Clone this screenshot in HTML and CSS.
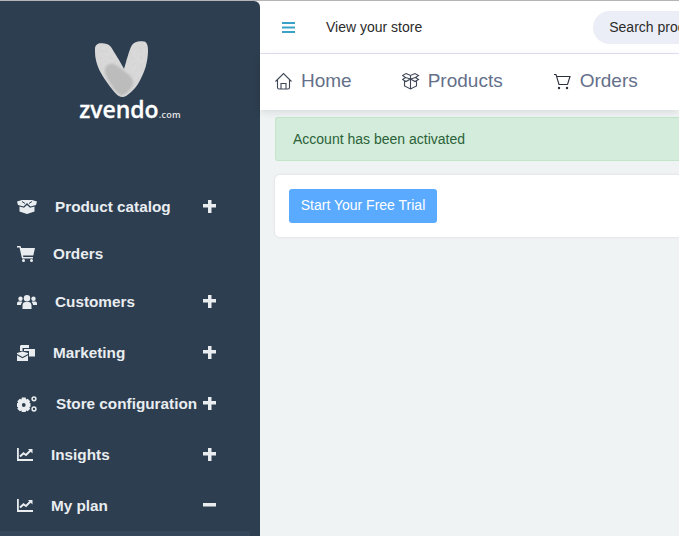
FILE: index.html
```html
<!DOCTYPE html>
<html lang="en">
<head>
<meta charset="utf-8">
<title>zvendo</title>
<link rel="stylesheet" href="styles.css">
</head>
<body>
<div class="app">
  <aside class="sidebar">
    <div class="logo">
      <svg class="logo-mark" width="56" height="58" viewBox="94 40 56 58" aria-hidden="true">
        <defs>
          <filter id="stone" x="0" y="0" width="100%" height="100%">
            <feTurbulence type="fractalNoise" baseFrequency="0.3" numOctaves="3" seed="7"/>
            <feColorMatrix values="0 0 0 0 0.6  0 0 0 0 0.6  0 0 0 0 0.6  0 0 0 .8 -0.25"/>
            <feComposite in2="SourceGraphic" operator="in"/>
            <feMerge><feMergeNode in="SourceGraphic"/><feMergeNode/></feMerge>
          </filter>
          <filter id="soft" x="-10%" y="-10%" width="120%" height="120%">
            <feGaussianBlur stdDeviation=".9"/>
          </filter>
        </defs>
        <path class="stone" filter="url(#stone)" d="M95 49C95 44 99 42.500 104 43.500C109 44 111 46 114 52C118 58 122 65 124 69C126 63 129 50 132 45C134 42 139 40.500 144 41.500C147 42 148 46 148 50C148 58 146 68 143 74C140 81 136 88 131 92C127 96 123 98 120 96.500C116 95 111 88 106 81C101 74 97 66 96 60C95 56 95 52 95 49Z"/>
        <path class="stone-dark" filter="url(#soft)" d="M105 72C104 67 108 63 113 64C118 65 123 71 128 74C132 77 134 81 133 84C131 89 127 94 122 95.500C118 95 114 89 110 83C107 79 106 76 105 72Z"/>
      </svg>
      <div class="logo-word">zvendo<span class="logo-com">.com</span></div>
    </div>
    <nav class="menu">
      <div class="item item-a">
        <svg class="ico" width="20" height="14" viewBox="0 0 20 14"><path d="M0 1.500L5 0H15L20 1.500L19 5L13.500 6.500L10 3L6.500 6.500L1 5Z"/><path d="M2.500 6.500L7 7.800L10 5L13 7.800L17.500 6.500V11.500L10 14L2.500 11.500Z"/><path class="cut" d="M5 1.500L8 3.500M15 1.500L12 3.500"/></svg>
        <span class="label l-55">Product catalog</span>
        <span class="tog"></span>
      </div>
      <div class="item item-b">
        <svg class="ico" width="18" height="16" viewBox="0 0 18 16"><path d="M0 0H3.500L4.200 2H18L16.300 9.500H6L6.300 11H16V12.500H5L2.500 1.500H0Z"/><circle cx="6.500" cy="14.500" r="1.500"/><circle cx="14.500" cy="14.500" r="1.500"/></svg>
        <span class="label l-53">Orders</span>
      </div>
      <div class="item">
        <svg class="ico" width="20" height="14" viewBox="0 0 20 14"><circle cx="10" cy="3.300" r="3.200"/><circle cx="3.500" cy="3.800" r="2.200"/><circle cx="16.500" cy="3.800" r="2.200"/><path d="M5.500 14V10.500C5.500 8 7 7 8.500 7H11.500C13 7 14.500 8 14.500 10.500V14ZM0 10V8.500C0 7 1 6.500 2 6.500H4.500C5 6.500 5.500 7 5 7.500C4.300 8.300 4 9 3.900 10ZM20 10V8.500C20 7 19 6.500 18 6.500H15.500C15 6.500 14.500 7 15 7.500C15.700 8.300 16 9 16.100 10Z"/></svg>
        <span class="label l-55">Customers</span>
        <span class="tog"></span>
      </div>
      <div class="item">
        <svg class="ico" width="18" height="16" viewBox="0 0 18 16"><path d="M4 0H12V3H5.500V6H3V1Z"/><path d="M7 4H18V11.500H12V6H7Z"/><path d="M0 8L5.500 6.500L11 8V9L5.500 12L0 9Z"/><path d="M0 10.300L5.500 13.300L11 10.300V16H0Z"/></svg>
        <span class="label l-53">Marketing</span>
        <span class="tog"></span>
      </div>
      <div class="item">
        <svg class="ico" width="20" height="16" viewBox="0 0 20 16"><path fill-rule="evenodd" d="M4.800 1.500H8.700L9.100 3.500L10.700 2.800L13.200 5.300L12.300 6.800L13.500 7.200V10.800L12.300 11.200L13.200 12.700L10.700 15.200L9.100 14.500L8.700 16H4.800L4.400 14.500L2.800 15.200L.3 12.700L1.200 11.200L0 10.800V7.200L1.200 6.800L.3 5.300L2.800 2.800L4.400 3.500ZM6.750 7.100A1.900 1.900 0 1 0 6.750 10.900A1.900 1.900 0 1 0 6.750 7.100Z"/><circle class="ring" cx="17" cy="2.800" r="1.900"/><circle class="ring" cx="17" cy="13" r="1.900"/></svg>
        <span class="label l-56">Store configuration</span>
        <span class="tog"></span>
      </div>
      <div class="item">
        <svg class="ico" width="16" height="13" viewBox="0 0 16 13"><path d="M0 0H1.800V11H16V13H0Z"/><path class="line" d="M3 8.500L6.500 5.200L9 7L13.500 2.500"/><path d="M11 1H15.500V5.500Z"/></svg>
        <span class="label l-51">Insights</span>
        <span class="tog"></span>
      </div>
      <div class="item">
        <svg class="ico" width="16" height="13" viewBox="0 0 16 13"><path d="M0 0H1.800V11H16V13H0Z"/><path class="line" d="M3 8.500L6.500 5.200L9 7L13.500 2.500"/><path d="M11 1H15.500V5.500Z"/></svg>
        <span class="label l-51">My plan</span>
        <span class="tog tog-minus"></span>
      </div>
      <div class="submenu"></div>
    </nav>
  </aside>
  <main class="main">
    <header class="topbar">
      <svg class="burger" width="13" height="11" viewBox="0 0 13 11"><path d="M0 0H13V2H0ZM0 4.500H13V6.500H0ZM0 9H13V11H0Z"/></svg>
      <a class="store-link">View your store</a>
      <div class="search">Search products</div>
    </header>
    <div class="tabs">
      <div class="tab tab-home">
        <svg class="tab-ico" width="18" height="18" viewBox="0 0 18 18"><path d="M1.500 9.500L9.500 1.500L17.500 9.500M3.500 8V15.500Q3.500 17 5 17H14Q15.500 17 15.500 15.500V8M7 17V11.500H12V17"/></svg>
        <span>Home</span>
      </div>
      <div class="tab tab-products">
        <svg class="tab-ico" width="18" height="18" viewBox="0 0 18 18"><path d="M4 1.500L8.500 3.500L13 1.500L16.500 3.500L13.500 5.500L16.500 7.500L13 9.500L8.500 7L4 9.500L.5 7.500L3.500 5.500L.5 3.500ZM3.500 5.500L8.500 7L13.500 5.500M8.500 3.500V7M2.500 9V14L8.500 17L14.500 14V9M8.500 7V17"/></svg>
        <span>Products</span>
      </div>
      <div class="tab">
        <svg class="tab-ico tab-cart" width="18" height="18" viewBox="0 0 18 18"><path d="M1 2.500H3L6 12.500H14.500M4 4.500H17L14.500 12.500"/><circle class="dot" cx="6" cy="16" r="1.200"/><circle class="dot" cx="14" cy="16" r="1.200"/></svg>
        <span>Orders</span>
      </div>
    </div>
    <div class="content">
      <div class="alert">Account has been activated</div>
      <section class="card">
        <button class="btn" type="button">Start Your Free Trial</button>
      </section>
    </div>
  </main>
</div>
</body>
</html>
```
FILE: styles.css
```css
* { box-sizing: border-box; }
html, body { margin: 0; height: 100%; overflow: hidden; }
body { font-family: "Liberation Sans", Arial, sans-serif; background: #eff3f4; }
.app { display: flex; height: 536px; width: 679px; overflow: hidden; border-top: 1px solid #b4b4b4; }
.sidebar { flex: 0 0 260px; background: #2d3e50; border-top-right-radius: 6px; display: flex; flex-direction: column; overflow: hidden; }
.logo { flex: none; height: 181px; padding-top: 39px; display: flex; flex-direction: column; align-items: center; }
.logo-mark { display: block; margin-right: 16px; }
.stone { fill: #dadada; }
.stone-dark { fill: #bcbcbc; }
.logo-word { font-family: "Open Sans", sans-serif; font-weight: 600; font-size: 23px; line-height: 24px; color: #fff; -webkit-text-stroke: .3px #fff; white-space: nowrap; margin-top: -1px; }
.logo-com { font-size: 9px; font-weight: 600; color: #e6e6e6; letter-spacing: .3px; -webkit-text-stroke: 0; }
.menu { display: flex; flex-direction: column; flex: none; }
.item { flex: none; display: flex; align-items: center; height: 51px; padding-left: 17px; position: relative; color: #e9edf0; }
.item-a { height: 49px; }
.item-b { height: 45px; }
.ico { fill: #e9edf0; display: block; flex: none; }
.ring { fill: none; stroke: #e9edf0; stroke-width: 1.500; }
.line { fill: none; stroke: #e9edf0; stroke-width: 2; }
.cut { fill: none; stroke: #2d3e50; stroke-width: 1; }
.label { font-size: 15.300px; font-weight: 700; position: absolute; white-space: nowrap; }
.l-51 { left: 51px; }
.l-53 { left: 53px; }
.l-55 { left: 55px; }
.l-56 { left: 56px; }
.tog { position: absolute; left: 203px; top: 50%; width: 13px; height: 13px; margin-top: -7px; background: linear-gradient(#e9edf0, #e9edf0) center / 13px 3.500px no-repeat, linear-gradient(#e9edf0, #e9edf0) center / 3.500px 13px no-repeat; }
.tog-minus { background: linear-gradient(#e9edf0, #e9edf0) center / 13px 3.500px no-repeat; }
.submenu { flex: none; height: 20px; width: 250px; background: #33465a; }
.main { flex: 1; min-width: 0; display: flex; flex-direction: column; }
.topbar { height: 53px; flex: none; background: #fff; display: flex; align-items: center; padding-left: 22px; border-bottom: 1px solid #e4e2f4; }
.burger { fill: #3ba2c7; flex: none; }
.store-link { margin-left: 31px; font-size: 14px; color: #2b2b2b; white-space: nowrap; }
.search { margin-left: 171px; flex: none; width: 220px; height: 33px; border-radius: 17px; background: #ebeef7; padding-left: 16px; font-size: 14px; line-height: 33px; color: #2b2b2b; white-space: nowrap; }
.tabs { height: 56px; flex: none; background: #fff; display: flex; align-items: center; padding: 0 0 2px 14px; color: #65708a; font-size: 19px; box-shadow: 0 2px 8px rgba(0,0,0,.1); position: relative; }
.tab { display: flex; align-items: center; gap: 9px; white-space: nowrap; }
.tab-home { margin-right: 50px; }
.tab-products { margin-right: 50px; gap: 8px; }
.tab-ico { fill: none; stroke: #3f4757; stroke-width: 1.100; flex: none; }
.tab-cart { stroke: #2b2f3a; }
.dot { fill: #2b2f3a; stroke: none; }
.content { flex: 1; padding: 7px 0 0 15px; display: flex; flex-direction: column; gap: 14px; }
.alert { height: 44px; width: 420px; background: #d4ecdb; border: 1px solid #c3e6cb; border-right: 0; border-radius: 3px 0 0 3px; padding-left: 17px; line-height: 42px; font-size: 14px; color: #2a6238; }
.card { height: 62px; width: 420px; background: #fff; border-radius: 5px 0 0 5px; box-shadow: 0 0 3px rgba(0,0,0,.1); padding: 14px; }
.btn { display: block; width: 148px; height: 34px; border: 0; border-radius: 3px; background: #5aaaff; color: #fff; font-family: inherit; font-size: 14px; padding: 0 0 2px; }
```
